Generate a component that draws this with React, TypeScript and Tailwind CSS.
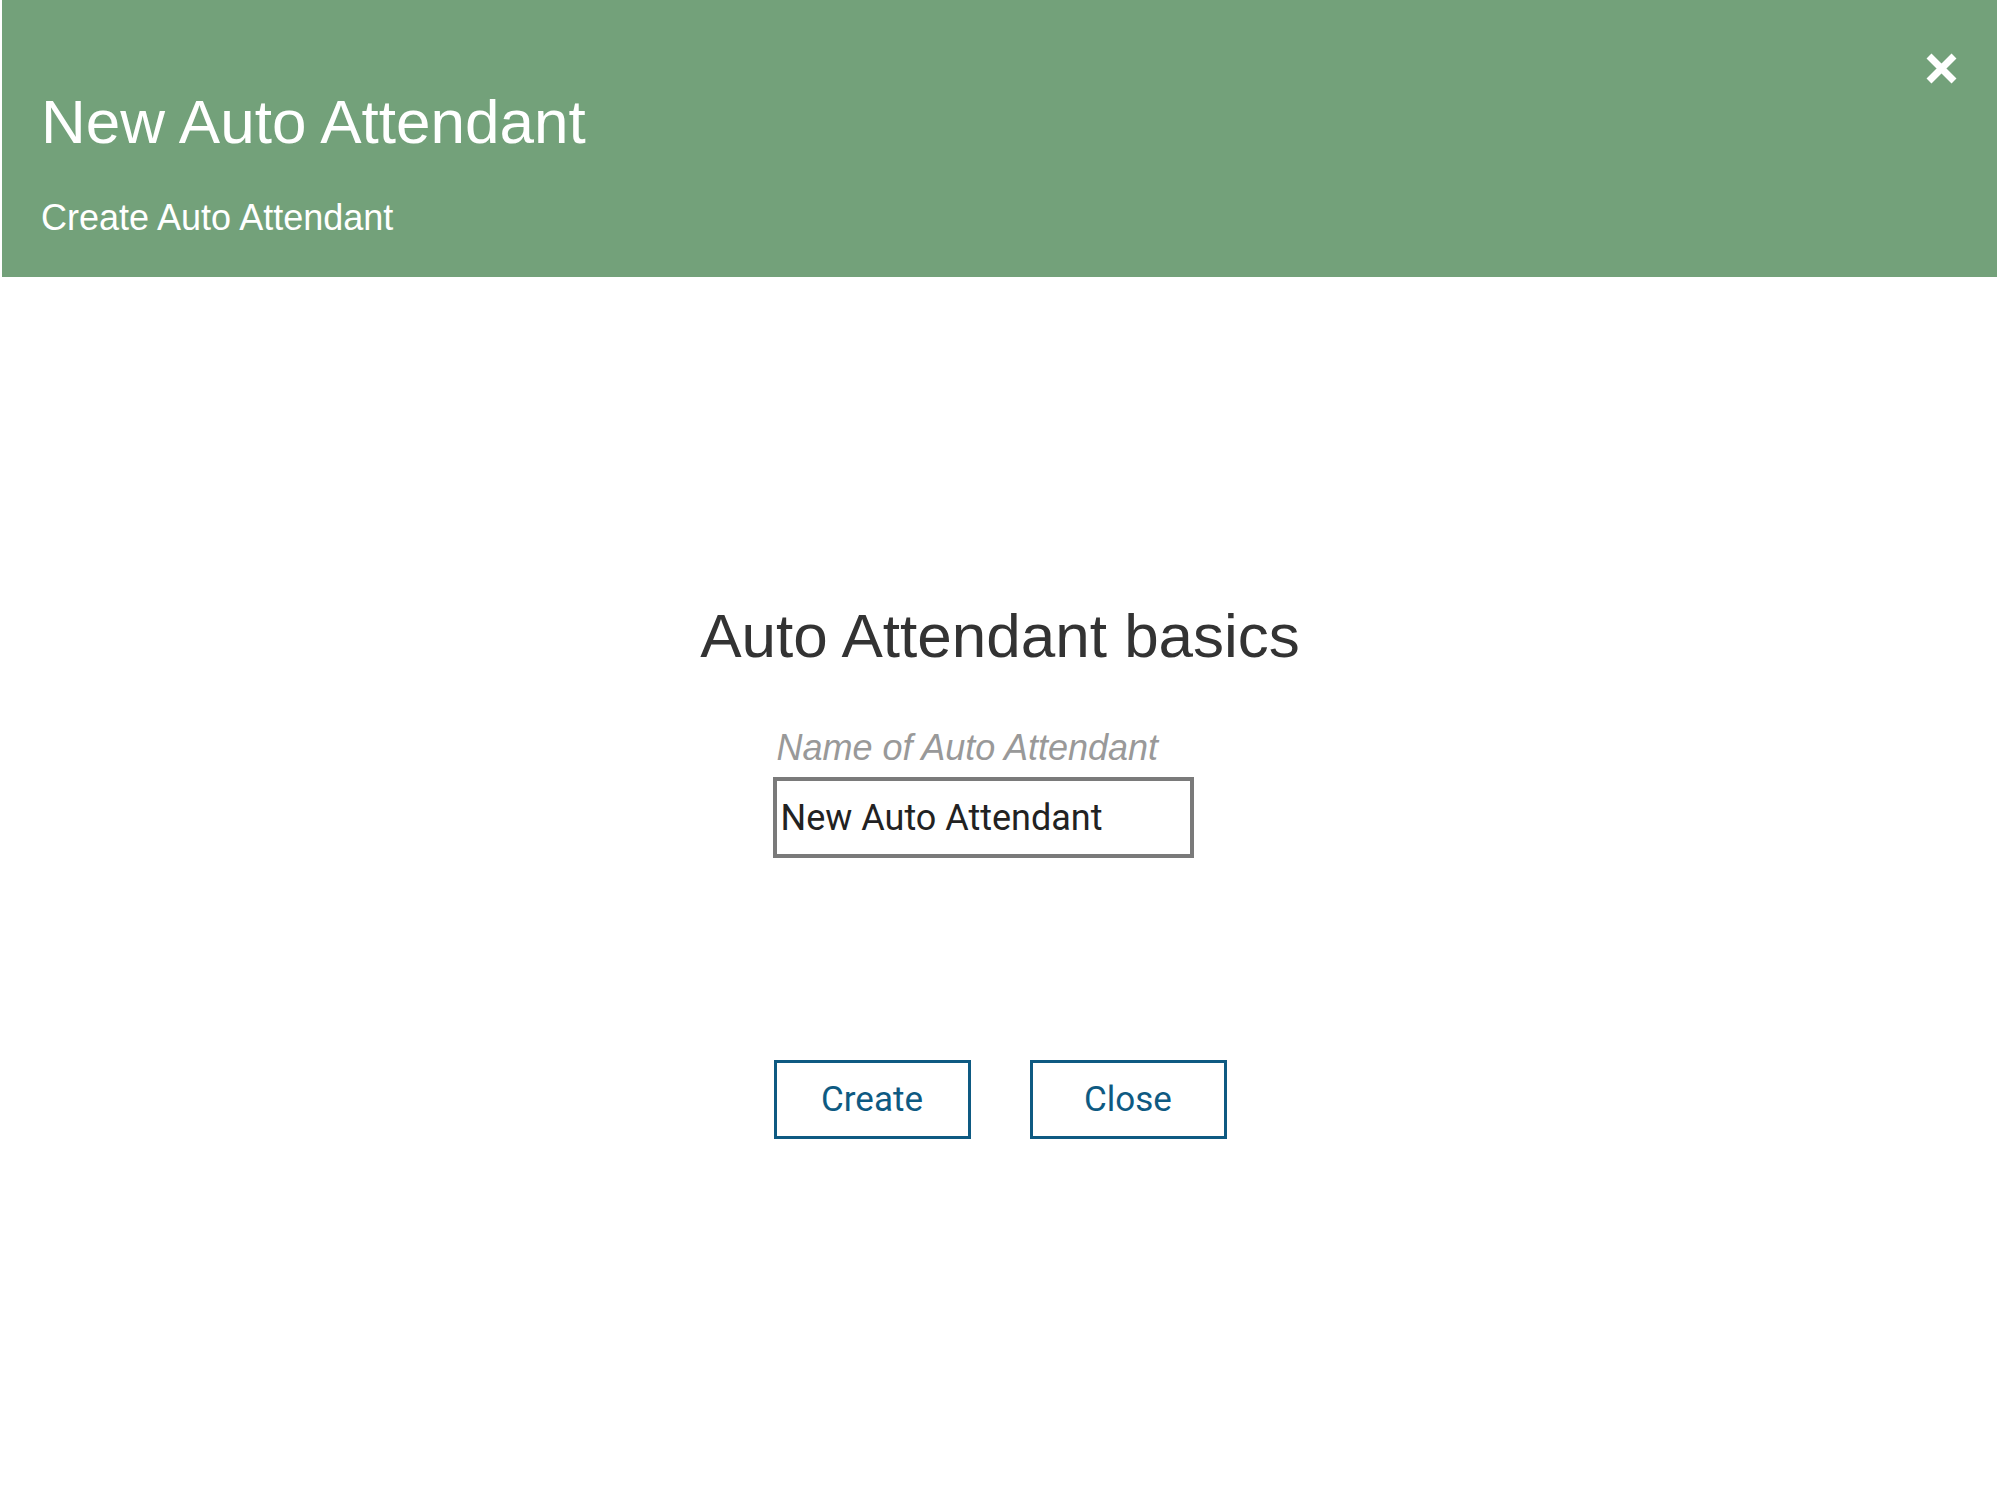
import React from "react";

export default function App() {
  return (
    <div className="w-[2000px] h-[1500px] bg-white" style={{ fontFamily: '"Liberation Sans", Arial, sans-serif' }}>
      <div className="ml-[2px] mr-[3px] h-[277px] bg-[#73a17a] flex justify-between">
        <div className="pl-[39px]">
          <div className="mt-[91px] text-[62px] leading-[62px] text-white font-['Liberation_Sans',Arial,sans-serif]">
            New Auto Attendant
          </div>
          <div className="mt-[47px] text-[36px] leading-[36px] text-white font-['Liberation_Sans',Arial,sans-serif]">
            Create Auto Attendant
          </div>
        </div>
        <div className="pt-[53px] pr-[40px]">
          <svg width="31" height="31" viewBox="0 0 31 31">
            <path d="M3 3 L28 28 M28 3 L3 28" stroke="#ffffff" strokeWidth="7" strokeLinecap="butt" fill="none" />
          </svg>
        </div>
      </div>

      <div className="flex flex-col items-center">
        <div className="mt-[328px] text-[62px] leading-[62px] text-[#333333] font-['Liberation_Sans',Arial,sans-serif]">
          Auto Attendant basics
        </div>
        <div className="w-[453px] flex flex-col">
          <div className="mt-[63px] pl-[3px] text-[36px] leading-[36px] italic text-[#999999] font-['Liberation_Sans',Arial,sans-serif]">
            Name of Auto Attendant
          </div>
          <div className="mt-[11px] -ml-[1px] w-[421px] h-[81px] border-[4px] border-[#7a7a7a] flex items-center pl-[4px] text-[36px] leading-[36px] text-[#222222] font-['Roboto',sans-serif]">
            New Auto Attendant
          </div>
          <div className="mt-[202px] flex gap-[59px]">
            <div className="w-[197px] h-[79px] border-[3px] border-[#0e5a82] flex items-center justify-center text-[35px] leading-[35px] text-[#0e5a82] font-['Roboto',sans-serif]">
              Create
            </div>
            <div className="w-[197px] h-[79px] border-[3px] border-[#0e5a82] flex items-center justify-center text-[35px] leading-[35px] text-[#0e5a82] font-['Roboto',sans-serif]">
              Close
            </div>
          </div>
        </div>
      </div>
    </div>
  );
}
